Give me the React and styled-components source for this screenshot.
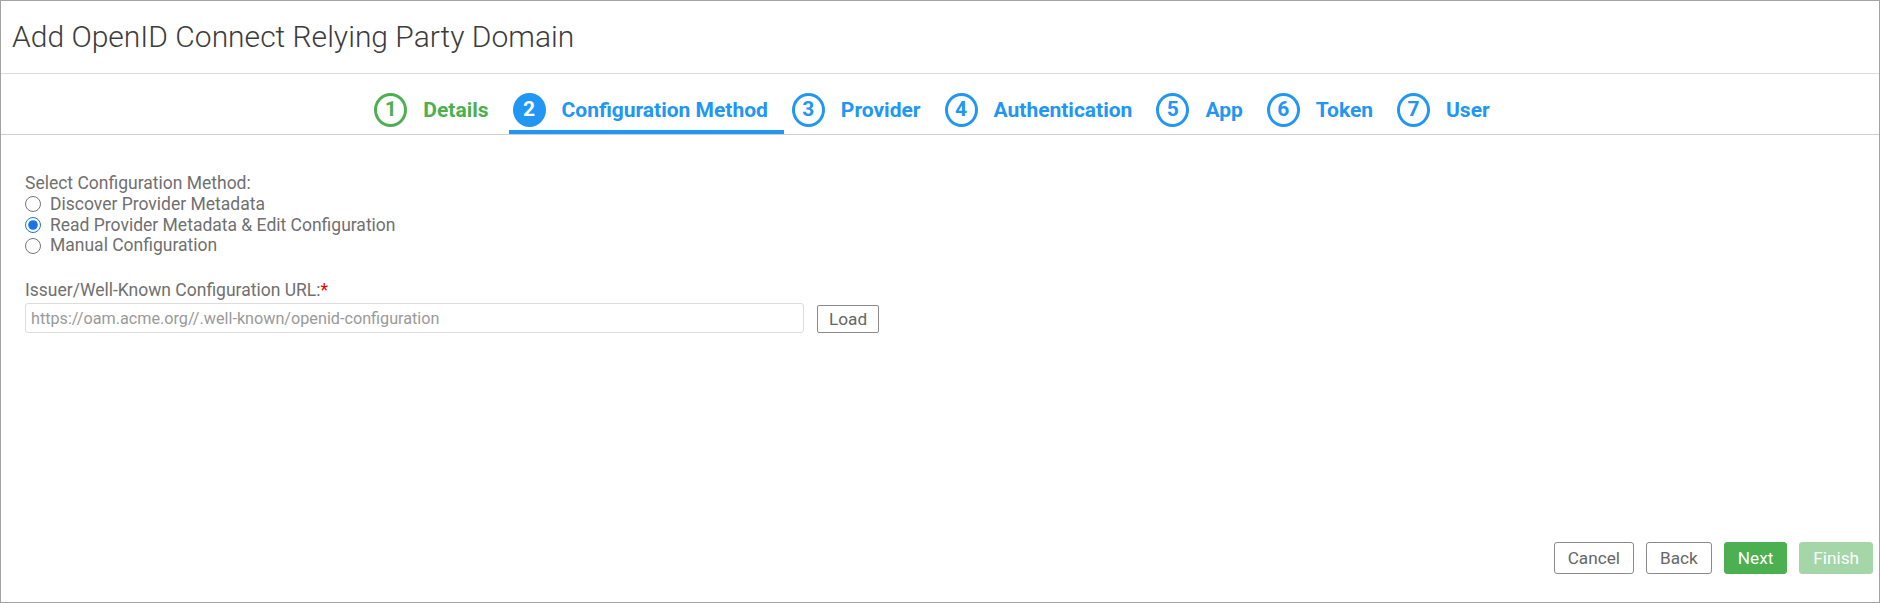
import React from "react";
import styled, { createGlobalStyle } from "styled-components";

const GlobalStyle = createGlobalStyle`
  html, body {
    margin: 0;
    padding: 0;
    background: #fff;
  }
  body {
    font-family: Roboto, "Liberation Sans", Arial, sans-serif;
  }
  * {
    box-sizing: border-box;
  }
`;

const Page = styled.div`
  width: 1880px;
  height: 603px;
  border: 1px solid #a3a3a3;
  display: flex;
  flex-direction: column;
  background: #fff;
`;

const Header = styled.div`
  height: 73px;
  flex: none;
  display: flex;
  align-items: center;
  padding: 0 0 1px 11px;
  border-bottom: 1px solid #dcdcdc;
`;

const Title = styled.h1`
  margin: 0;
  font-size: 30px;
  font-weight: 300;
  color: #3c3c3c;
`;

const TabBar = styled.div`
  height: 61px;
  flex: none;
  display: flex;
  justify-content: center;
  align-items: stretch;
  border-bottom: 1px solid #cfcfcf;
`;

const Tab = styled.div`
  display: flex;
  align-items: center;
  padding: 15px 16px 0 4px;
  margin-right: 4px;
  border-bottom: 4px solid ${(p) => (p.$active ? "#2196f3" : "transparent")};
`;

const Circle = styled.span`
  width: 33px;
  height: 34px;
  border-radius: 50%;
  display: flex;
  align-items: center;
  justify-content: center;
  font-size: 21px;
  font-weight: 700;
  border: 3px solid ${(p) => p.$color};
  background: ${(p) => (p.$filled ? p.$color : "transparent")};
  color: ${(p) => (p.$filled ? "#fff" : p.$color)};
  margin-right: 16px;
  line-height: 1;
`;

const TabText = styled.span`
  font-size: 21px;
  font-weight: 700;
  color: ${(p) => p.$color};
`;

const Content = styled.div`
  flex: 1;
  padding: 38px 24px 0 24px;
  color: #707070;
  font-size: 17.5px;
`;

const FieldLabel = styled.div`
  line-height: 21px;
`;

const RadioRow = styled.label`
  display: flex;
  align-items: center;
  height: 20.7px;
  line-height: 21px;
`;

const Radio = styled.input`
  width: 16px;
  height: 16px;
  margin: 0 9px 0 0;
  accent-color: #1a73e8;
`;

const Required = styled.span`
  color: #e00000;
`;

const UrlBlock = styled.div`
  margin-top: 24px;
`;

const UrlRow = styled.div`
  display: flex;
  align-items: center;
  margin-top: 2px;
`;

const TextInput = styled.input`
  width: 779px;
  height: 30px;
  border: 1px solid #dddddd;
  border-radius: 3px;
  padding: 0 5px;
  font-family: inherit;
  font-size: 16.2px;
  color: #999;
  outline: none;
  &::placeholder {
    color: #9a9a9a;
  }
`;

const Button = styled.button`
  height: ${(p) => (p.$small ? "28px" : "32px")};
  padding: 0 13px;
  font-family: inherit;
  font-size: 17.2px;
  border-radius: 3px;
  cursor: pointer;
  border: 1px solid ${(p) =>
    p.$variant === "primary" ? "#4caf50" : p.$variant === "disabled" ? "#a5d6a7" : "#8a8a8a"};
  background: ${(p) =>
    p.$variant === "primary" ? "#4caf50" : p.$variant === "disabled" ? "#a5d6a7" : "#fff"};
  color: ${(p) => (p.$variant ? "#fff" : "#666")};
`;

const LoadButton = styled(Button)`
  margin-left: 13px;
  margin-top: 2px;
  padding: 0 11px;
  border-radius: 2px;
`;

const Footer = styled.div`
  display: flex;
  justify-content: flex-end;
  gap: 12px;
  padding: 0 6px 28px 0;
`;

const GREEN = "#4caf50";
const BLUE = "#2196f3";

const steps = [
  { n: 1, label: "Details", done: true },
  { n: 2, label: "Configuration Method", active: true },
  { n: 3, label: "Provider" },
  { n: 4, label: "Authentication" },
  { n: 5, label: "App" },
  { n: 6, label: "Token" },
  { n: 7, label: "User" },
];

export default function App() {
  return (
    <>
      <GlobalStyle />
      <Page>
        <Header>
          <Title>Add OpenID Connect Relying Party Domain</Title>
        </Header>
        <TabBar>
          {steps.map((s) => {
            const color = s.done ? GREEN : BLUE;
            return (
              <Tab key={s.n} $active={s.active}>
                <Circle $color={color} $filled={s.active}>
                  {s.n}
                </Circle>
                <TabText $color={color}>{s.label}</TabText>
              </Tab>
            );
          })}
        </TabBar>
        <Content>
          <FieldLabel>Select Configuration Method:</FieldLabel>
          <RadioRow>
            <Radio type="radio" name="method" />
            Discover Provider Metadata
          </RadioRow>
          <RadioRow>
            <Radio type="radio" name="method" defaultChecked />
            Read Provider Metadata &amp; Edit Configuration
          </RadioRow>
          <RadioRow>
            <Radio type="radio" name="method" />
            Manual Configuration
          </RadioRow>
          <UrlBlock>
            <FieldLabel>
              Issuer/Well-Known Configuration URL:<Required>*</Required>
            </FieldLabel>
            <UrlRow>
              <TextInput placeholder="https://oam.acme.org//.well-known/openid-configuration" />
              <LoadButton $small>Load</LoadButton>
            </UrlRow>
          </UrlBlock>
        </Content>
        <Footer>
          <Button>Cancel</Button>
          <Button>Back</Button>
          <Button $variant="primary">Next</Button>
          <Button $variant="disabled">Finish</Button>
        </Footer>
      </Page>
    </>
  );
}
